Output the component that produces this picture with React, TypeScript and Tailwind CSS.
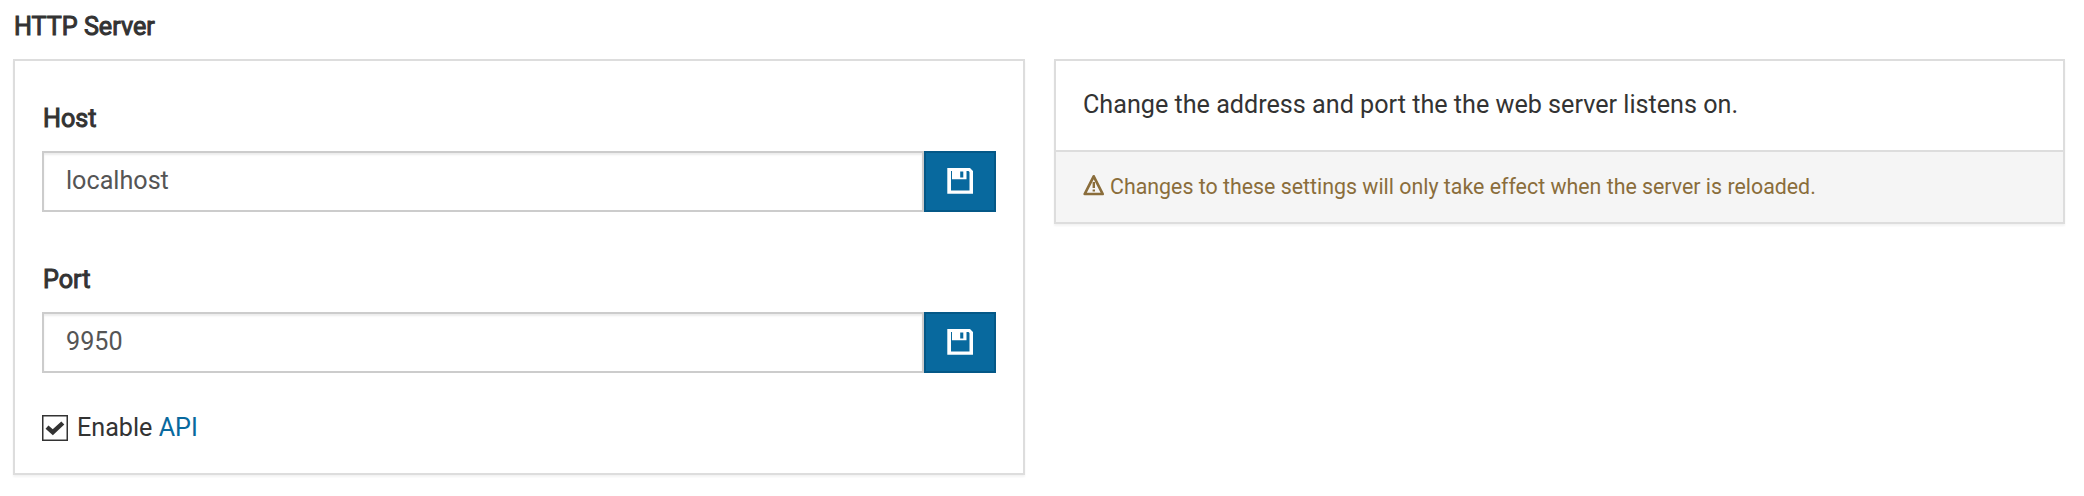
import type { ReactNode } from "react";

function SaveIcon() {
  return (
    <svg width="26" height="26" viewBox="0 0 26 26" className="block" fill="#fff" aria-hidden="true">
      <path
        fillRule="evenodd"
        d="M0.3 0H23L26 3V25.7H0.3ZM4 3V22.5H22.5V4L21.5 3H19.5V11.3H5V3ZM13.2 3.5V9.5H16.3V3.5Z"
      />
    </svg>
  );
}

function WarningIcon() {
  return (
    <svg width="22" height="22" viewBox="0 0 22 22" className="block" aria-hidden="true">
      <path d="M10.7 2.3L19.7 20H1.7Z" fill="none" stroke="#8a6d3b" strokeWidth="2.7" strokeLinejoin="round" />
      <path d="M9.6 8H12V14H9.6ZM9.6 15.5H12V17.5H9.6Z" fill="#8a6d3b" />
    </svg>
  );
}

function CheckedIcon() {
  return (
    <svg width="26" height="26" viewBox="0 0 26 26" className="block" aria-hidden="true">
      <rect x="0.75" y="0.75" width="24.5" height="24.5" fill="#fff" stroke="#333" strokeWidth="1.5" />
      <path d="M5 12.2L10.8 17.2L20.8 8" fill="none" stroke="#333" strokeWidth="4.4" />
    </svg>
  );
}

function Heading({ children }: { children: ReactNode }) {
  return <span className="block h-9 leading-[38px] [-webkit-text-stroke:1px_#333]">{children}</span>;
}

function Field({ label, value }: { label: string; value: string }) {
  return (
    <div>
      <div className="pl-px">
        <Heading>{label}</Heading>
      </div>
      <div className="mt-[15px] flex h-[61px]">
        <input
          type="text"
          aria-label={label}
          defaultValue={value}
          className="min-w-0 flex-1 border-2 border-[#ccc] bg-white px-[22px] pb-[2px] text-[#555] shadow-[inset_0_2px_2px_rgba(0,0,0,0.075)] outline-none"
        />
        <button
          type="button"
          aria-label="Save"
          className="flex w-[72px] items-center justify-center border-2 border-[#045887] bg-[#08699e] pb-px"
        >
          <SaveIcon />
        </button>
      </div>
    </div>
  );
}

export default function App() {
  return (
    <main className="h-[496px] w-[2084px] bg-white pl-[13px] pr-[19px] pt-2 font-['Roboto',sans-serif] text-[25.16px] text-[#333]">
      <div className="pl-px">
        <Heading>HTTP Server</Heading>
      </div>
      <div className="mt-[15px] flex items-start gap-[29px]">
        <section className="h-[416px] w-[1012px] border-2 border-[#ddd] bg-white px-[27px] pt-[39px] shadow-[0_2px_2px_rgba(0,0,0,0.05)]">
          <Field label="Host" value="localhost" />
          <div className="mt-[49px]">
            <Field label="Port" value="9950" />
          </div>
          <label className="mt-[37px] flex h-9 items-center">
            <CheckedIcon />
            <span className="ml-[9px] pb-px leading-[35px]">
              Enable <a className="text-[#08699e]">API</a>
            </span>
          </label>
        </section>
        <section className="h-[165px] w-[1011px] border-2 border-[#ddd] bg-white shadow-[0_2px_2px_rgba(0,0,0,0.05)]">
          <p className="h-[89px] px-[27px] pt-[26px] leading-9">
            Change the address and port the the web server listens on.
          </p>
          <p className="flex h-[72px] items-center border-t-2 border-[#ddd] bg-[#f5f5f5] px-[27px] pb-1 text-[21.36px] text-[#8a6d3b]">
            <WarningIcon />
            <span className="ml-[5px] pt-1">
              Changes to these settings will only take effect when the server is reloaded.
            </span>
          </p>
        </section>
      </div>
    </main>
  );
}
